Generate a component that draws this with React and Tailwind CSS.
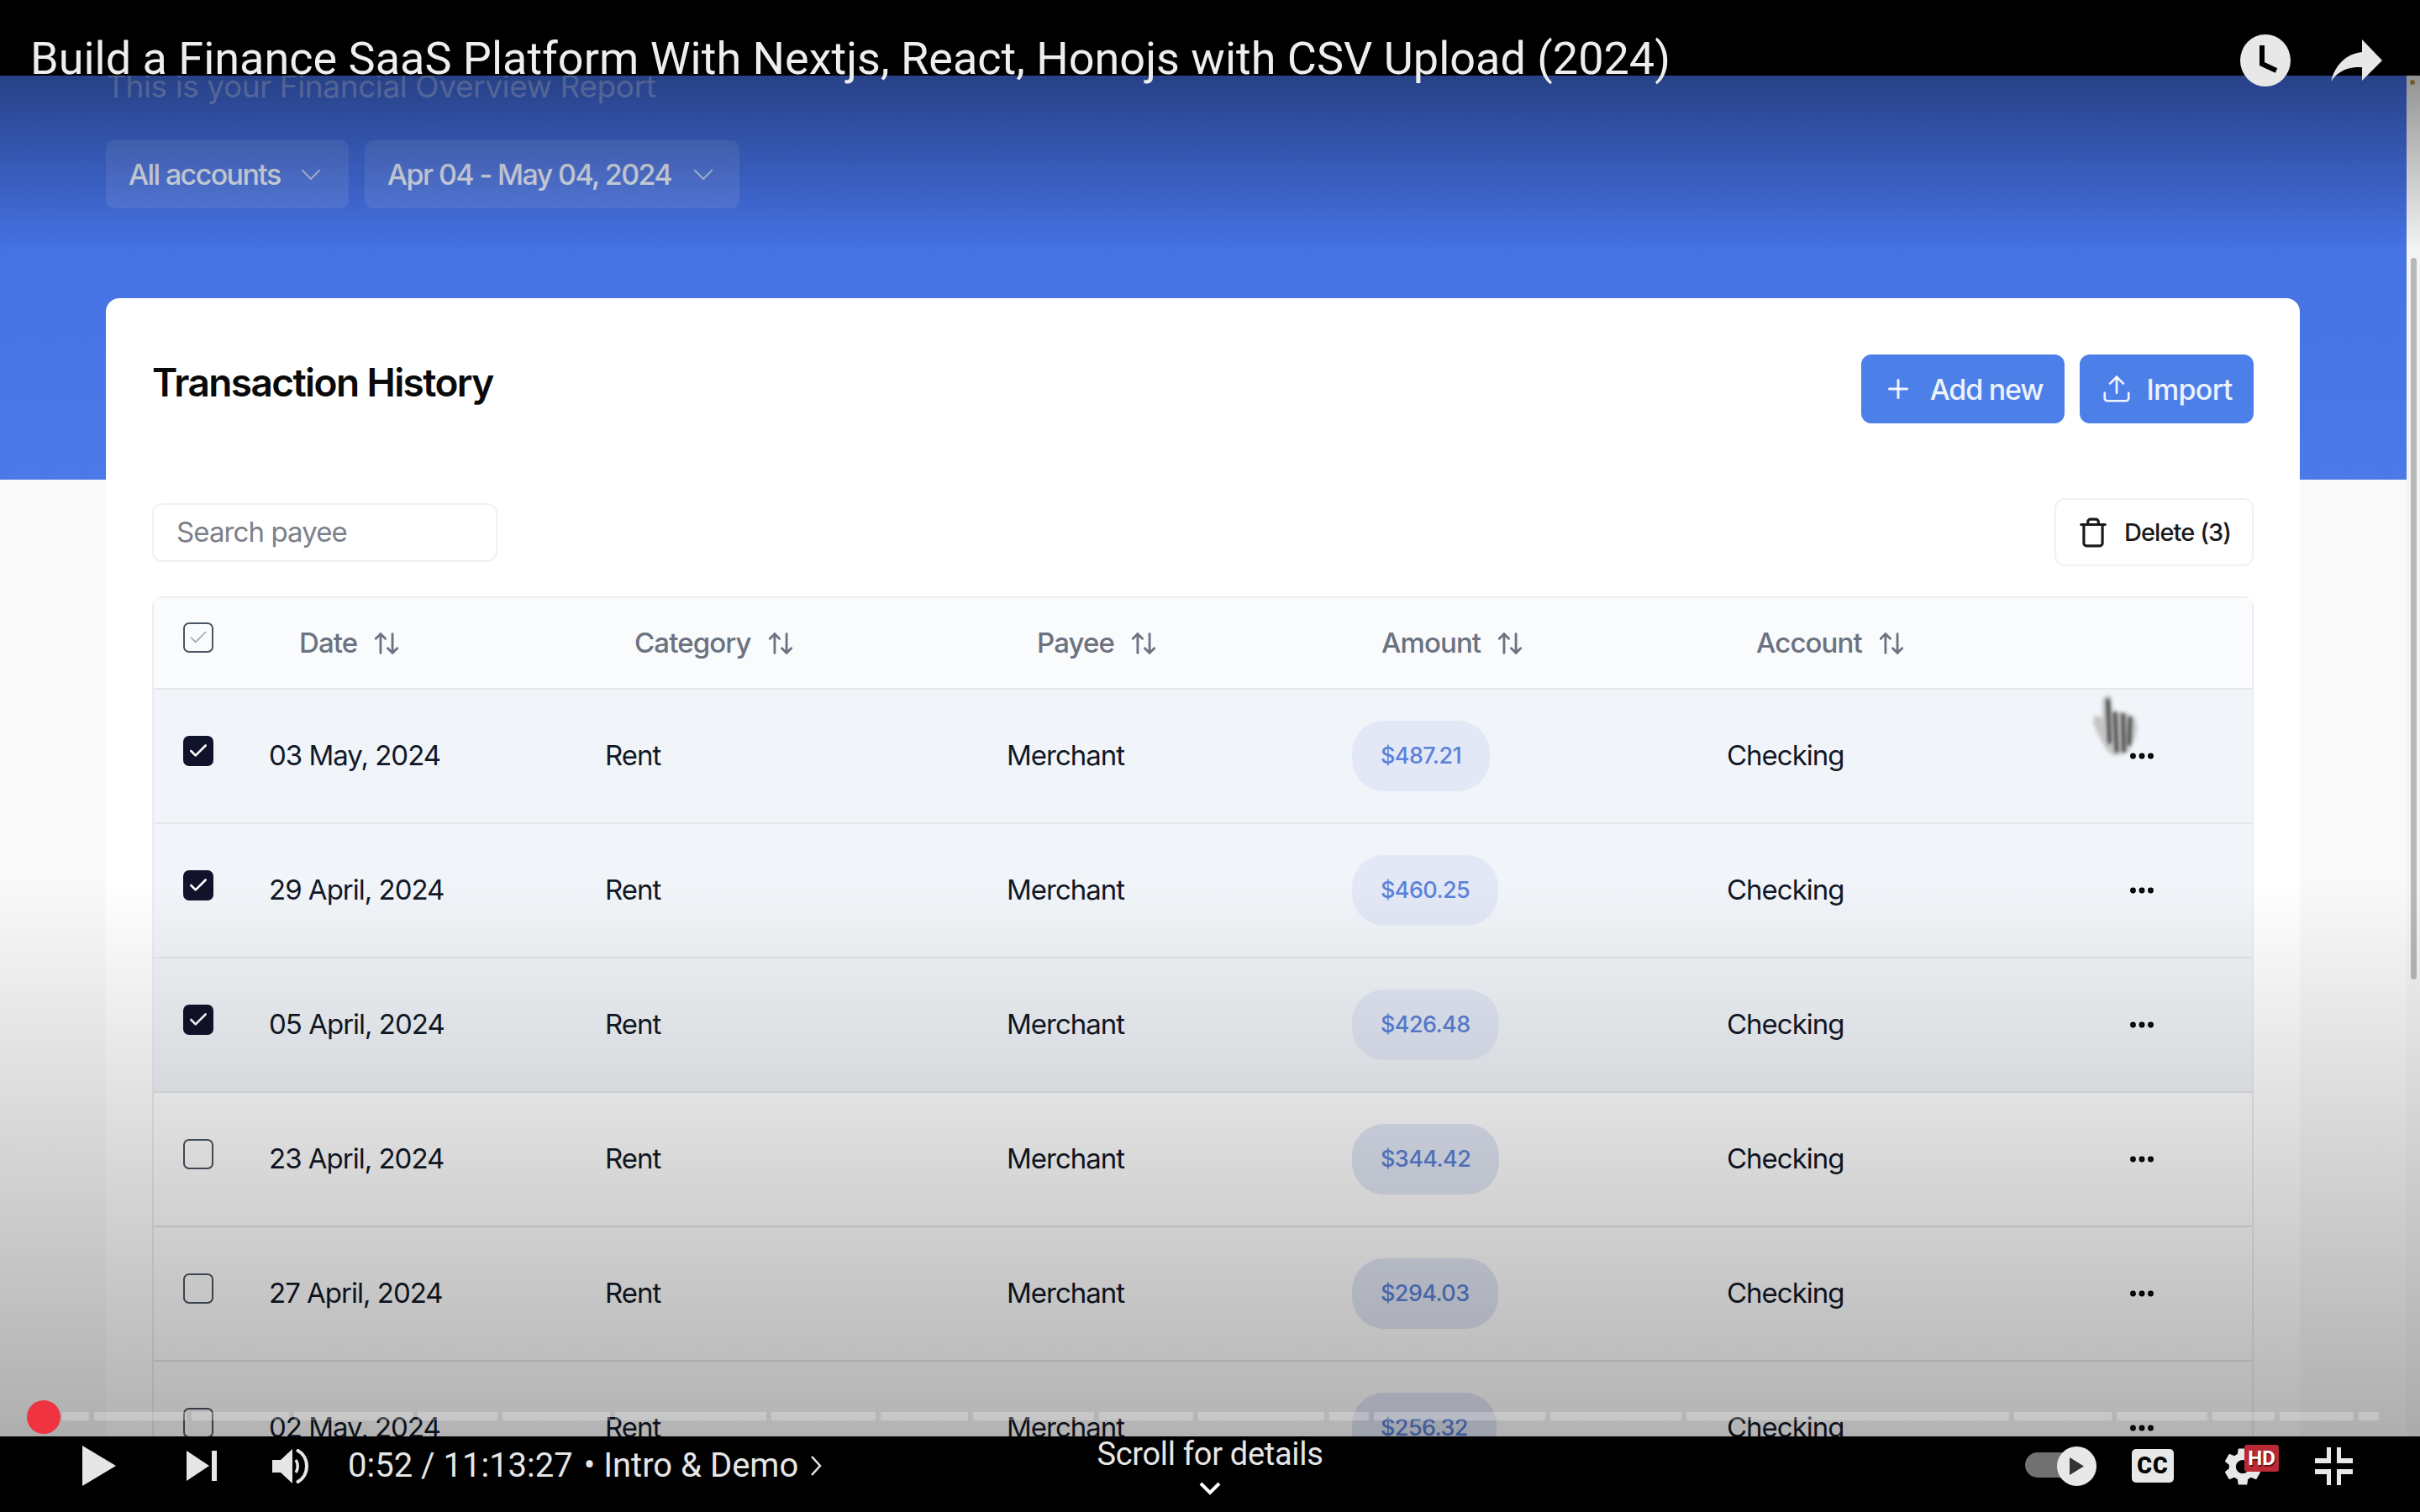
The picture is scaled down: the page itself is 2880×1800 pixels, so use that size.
import { ArrowUpDown, Check, ChevronDown, Ellipsis, Plus, Trash, Upload } from "lucide-react";
import { MdSettings } from "react-icons/md";

const rows = [
  { date: "03 May, 2024", amount: "$487.21", selected: true },
  { date: "29 April, 2024", amount: "$460.25", selected: true },
  { date: "05 April, 2024", amount: "$426.48", selected: true },
  { date: "23 April, 2024", amount: "$344.42", selected: false },
  { date: "27 April, 2024", amount: "$294.03", selected: false },
  { date: "02 May, 2024", amount: "$256.32", selected: false },
];

const columns = ["Date", "Category", "Payee", "Amount", "Account"];

// chapter widths of the progress bar, left to right
const chapters = [32, 110, 116, 141, 95, 128, 180, 124, 104, 144, 112, 150, 47, 204, 156, 384, 116, 108, 74, 88, 24];

function Checkbox({ checked, faint }) {
  if (checked) {
    return (
      <span className="flex h-[36px] w-[36px] items-center justify-center rounded-[7px] bg-[#10132a]">
        <Check size={26} strokeWidth={2.4} className="text-white" />
      </span>
    );
  }
  return (
    <span className="flex h-[36px] w-[36px] items-center justify-center rounded-[7px] border-2 border-[#4b5563]">
      {faint && <Check size={26} strokeWidth={1.5} className="text-[#9ca3af]" />}
    </span>
  );
}

function HeaderCell({ label }) {
  return (
    <div className="flex items-center gap-[18px] text-[#6b7280]">
      <span className="text-[33px] font-medium tracking-[-0.9px]">{label}</span>
      <ArrowUpDown size={34} strokeWidth={2} />
    </div>
  );
}

function Row({ row }) {
  return (
    <div
      className={`grid h-[160px] grid-cols-[137px_400px_478px_411px_446px_476px_1fr] items-center border-t-2 border-[#e5e7eb] text-[33px] tracking-[-1px] text-[#111827] ${
        row.selected ? "bg-[#f1f5f9]" : "bg-white"
      }`}
    >
      <div className="mb-[12px] pl-[35px]">
        <Checkbox checked={row.selected} />
      </div>
      <div>{row.date}</div>
      <div>Rent</div>
      <div>Merchant</div>
      <div>
        <span className="inline-flex h-[84px] items-center rounded-[38px] bg-[#e3e8f6] px-[34px] text-[27px] font-medium tracking-[-0.6px] text-[#5b82d8]">
          {row.amount}
        </span>
      </div>
      <div>Checking</div>
      <div className="text-black">
        <Ellipsis size={36} strokeWidth={2.6} />
      </div>
    </div>
  );
}

function Dropdown({ label, width, chevronGap }) {
  return (
    <div className={`flex h-[81px] items-center rounded-[10px] bg-white/10 pl-[27px] text-[34px] font-medium tracking-[-1.6px] text-white/85 ${width}`}>
      <span className={chevronGap}>{label}</span>
      <ChevronDown size={40} strokeWidth={1.3} className="text-white/60" />
    </div>
  );
}

function HandCursor() {
  return (
    <svg width="62" height="76" viewBox="0 0 56 72" className="absolute left-[2486px] top-[736px] blur-[2px]">
      <path
        d="M18 2c3-2 6 0 6 4l2 16 8-2 8 2 8 4 3 10-2 14-8 16-16 4-8-6-10-18-6-14 3-8 6 2 2 2V8c0-3 2-5 4-6Z"
        fill="#c4c4c4"
      />
      <path d="M20 6l2 50M28 20l2 46M37 22l1 44M45 26l-1 32" stroke="#2c2c2c" strokeWidth="3.5" fill="none" />
    </svg>
  );
}

function ProgressBar() {
  return (
    <>
      <div className="absolute bottom-[19px] left-[74px] flex h-[10px] gap-[6px]">
        {chapters.map((width, i) => (
          <div key={i} className="h-full bg-white/25" style={{ width }} />
        ))}
      </div>
      <div className="absolute bottom-[3px] left-[32px] h-[40px] w-[40px] rounded-full bg-[#ef3340]" />
    </>
  );
}

function TopBar() {
  return (
    <div className="relative z-20 flex h-[90px] shrink-0 items-start bg-black font-['Roboto',sans-serif] text-[#eeeeee]">
      <div className="ml-[36px] mt-[37px] whitespace-nowrap text-[54px] leading-[66px]">
        Build a Finance SaaS Platform With Nextjs, React, Honojs with CSV Upload (2024)
      </div>
      <svg width="60" height="62" viewBox="0 0 60 62" className="ml-auto mt-[41px]">
        <ellipse cx="30" cy="31" rx="30" ry="31" fill="#e8e8e8" />
        <path d="M26 13v22l17 8" stroke="#000" strokeWidth="6" fill="none" />
      </svg>
      <svg width="61" height="50" viewBox="0 0 61 50" className="ml-[48px] mr-[45px] mt-[47px]">
        <path d="M37 0 61 25 37 49V33C20 32 8 38 0 50 5 30 18 17 37 15Z" fill="#e8e8e8" />
      </svg>
    </div>
  );
}

function BottomBar() {
  return (
    <div className="relative z-20 grid h-[90px] shrink-0 grid-cols-[1fr_auto_1fr] bg-black font-['Roboto',sans-serif] text-[#e6e6e6]">
      <div className="flex items-center pb-[20px] pl-[98px]">
        <svg width="40" height="48" viewBox="0 0 40 48">
          <path d="M0 0 40 24 0 48Z" fill="#e6e6e6" />
        </svg>
        <svg width="36" height="36" viewBox="0 0 36 36" className="ml-[84px]">
          <path d="M0 0 27 18 0 36Z M30 0h6v36h-6Z" fill="#e6e6e6" />
        </svg>
        <svg width="43" height="41" viewBox="0 0 43 41" className="ml-[66px]">
          <path d="M0 13h10L24 0v41L10 28H0Z" fill="#e6e6e6" />
          <path d="M28 13c3 4 3 11 0 15" stroke="#e6e6e6" strokeWidth="3.5" fill="none" />
          <path d="M29 1c16 8 16 31 0 39" stroke="#e6e6e6" strokeWidth="4" fill="none" />
        </svg>
        <span className="ml-[47px] whitespace-nowrap text-[40px]">0:52 / 11:13:27</span>
        <span className="ml-[13px] whitespace-nowrap text-[40px]">• Intro &amp; Demo</span>
        <svg width="14" height="26" viewBox="0 0 14 26" className="ml-[14px]">
          <path d="M2 2l10 11L2 24" stroke="#e6e6e6" strokeWidth="2.5" fill="none" />
        </svg>
      </div>
      <div className="flex flex-col items-center">
        <span className="text-[38px] leading-[42px] tracking-[-0.3px]">Scroll for details</span>
        <svg width="26" height="16" viewBox="0 0 26 16" className="mt-[12px]">
          <path d="M2 2l11 11L24 2" stroke="#fff" strokeWidth="4" fill="none" />
        </svg>
      </div>
      <div className="flex items-center justify-end pb-[20px] pr-[80px]">
        <div className="relative h-[47px] w-[85px]">
          <div className="absolute left-0 top-[7px] h-[30px] w-[60px] rounded-full bg-[#717171]" />
          <div className="absolute right-0 top-0 flex h-[47px] w-[47px] items-center justify-center rounded-full bg-[#e8e8e8]">
            <svg width="17" height="21" viewBox="0 0 17 21">
              <path d="M0 0 17 10.5 0 21Z" fill="#333" />
            </svg>
          </div>
        </div>
        <div className="ml-[42px] flex h-[40px] w-[50px] items-center justify-center rounded-[5px] bg-[#e8e8e8] text-[27px] font-black leading-none tracking-[1px] text-black">
          CC
        </div>
        <div className="relative ml-[61px] h-[46px] w-[64px]">
          <MdSettings size={54} className="absolute -left-[6px] -top-[3px] text-[#e8e8e8]" />
          <span className="absolute right-0 top-[-2px] flex h-[32px] w-[41px] items-center justify-center rounded-[3px] bg-[#b92a36] text-[24px] font-bold leading-none text-white [text-shadow:1px_2px_0_#6b0f18]">
            HD
          </span>
        </div>
        <svg width="45" height="45" viewBox="0 0 45 45" className="ml-[43px]">
          <path d="M14 0h5v19H0v-6h14Z M26 0h5v13h14v6H26Z M0 26h19v19h-5V32H0Z M26 26h19v6H31v13h-5Z" fill="#e8e8e8" />
        </svg>
      </div>
    </div>
  );
}

export default function App() {
  return (
    <div className="flex h-[1800px] w-[2880px] flex-col overflow-hidden bg-black font-['Inter',sans-serif]">
      <TopBar />
      <div className="relative flex min-h-0 flex-1 overflow-hidden">
        <div className="min-w-0 flex-1 bg-[#f9f9f9]">
          <section className="flex h-[481px] flex-col bg-gradient-to-b from-[#426de2] to-[#4b79e7] px-[126px]">
            <p className="-mt-[12px] h-[50px] text-[37px] leading-[50px] tracking-[-0.4px] text-white/35">
              This is your Financial Overview Report
            </p>
            <div className="mt-[39px] flex gap-[19px]">
              <Dropdown label="All accounts" width="w-[289px]" chevronGap="mr-[16px]" />
              <Dropdown label="Apr 04 - May 04, 2024" width="w-[446px]" chevronGap="mr-[18px]" />
            </div>
          </section>
          <section className="-mt-[216px] ml-[126px] mr-[127px] rounded-t-[16px] bg-white px-[55px] pt-[67px]">
            <div className="flex items-start justify-between">
              <h1 className="-mt-[1px] text-[46px] font-semibold leading-[68px] tracking-[-1.6px] text-[#0a0a0a]">
                Transaction History
              </h1>
              <div className="flex gap-[18px]">
                <button className="flex h-[82px] w-[242px] items-center justify-center gap-[20px] rounded-[12px] bg-[#4d7fe9] text-[34px] font-medium tracking-[-1.2px] text-white/90">
                  <Plus size={36} strokeWidth={2} />
                  Add new
                </button>
                <button className="flex h-[82px] w-[207px] items-center justify-center gap-[16px] rounded-[12px] bg-[#4d7fe9] text-[34px] font-medium tracking-[-0.7px] text-white/90">
                  <Upload size={38} strokeWidth={1.7} />
                  Import
                </button>
              </div>
            </div>
            <div className="mt-[89px] flex items-center justify-between">
              <div className="flex h-[70px] w-[411px] items-center rounded-[12px] border-2 border-[#f0f1f3] pl-[27px] text-[33px] tracking-[-0.9px] text-[#7b808a]">
                Search payee
              </div>
              <button className="flex h-[81px] w-[237px] items-center justify-center gap-[18px] rounded-[12px] border-2 border-[#f0f1f3] text-[29px] font-medium tracking-[-0.9px] text-[#1a1a1a]">
                <Trash size={38} strokeWidth={2} />
                Delete (3)
              </button>
            </div>
            <div className="mt-[36px] rounded-t-[12px] border-2 border-[#ebedf0]">
              <div className="grid h-[107px] grid-cols-[173px_399px_479px_410px_446px_1fr] items-center bg-[#fafbfd]">
                <div className="mb-[14px] pl-[35px]">
                  <Checkbox faint />
                </div>
                {columns.map((label) => (
                  <HeaderCell key={label} label={label} />
                ))}
              </div>
              {rows.map((row) => (
                <Row key={row.date} row={row} />
              ))}
            </div>
          </section>
        </div>
        <div className="relative w-[16px] shrink-0 bg-[#f4f4f4]">
          <div className="absolute left-[5px] top-[217px] h-[859px] w-[7px] rounded-full bg-[#b8b8b8]" />
          <div className="absolute left-[4px] top-[5px] h-[6px] w-[6px] rounded-full bg-[#b09a50]" />
        </div>
        <HandCursor />
        <div className="absolute inset-x-0 top-0 h-[210px] bg-gradient-to-b from-black/40 to-transparent" />
        <div className="absolute inset-x-0 bottom-0 h-[660px] bg-gradient-to-b from-transparent to-black/30" />
        <ProgressBar />
      </div>
      <BottomBar />
    </div>
  );
}
